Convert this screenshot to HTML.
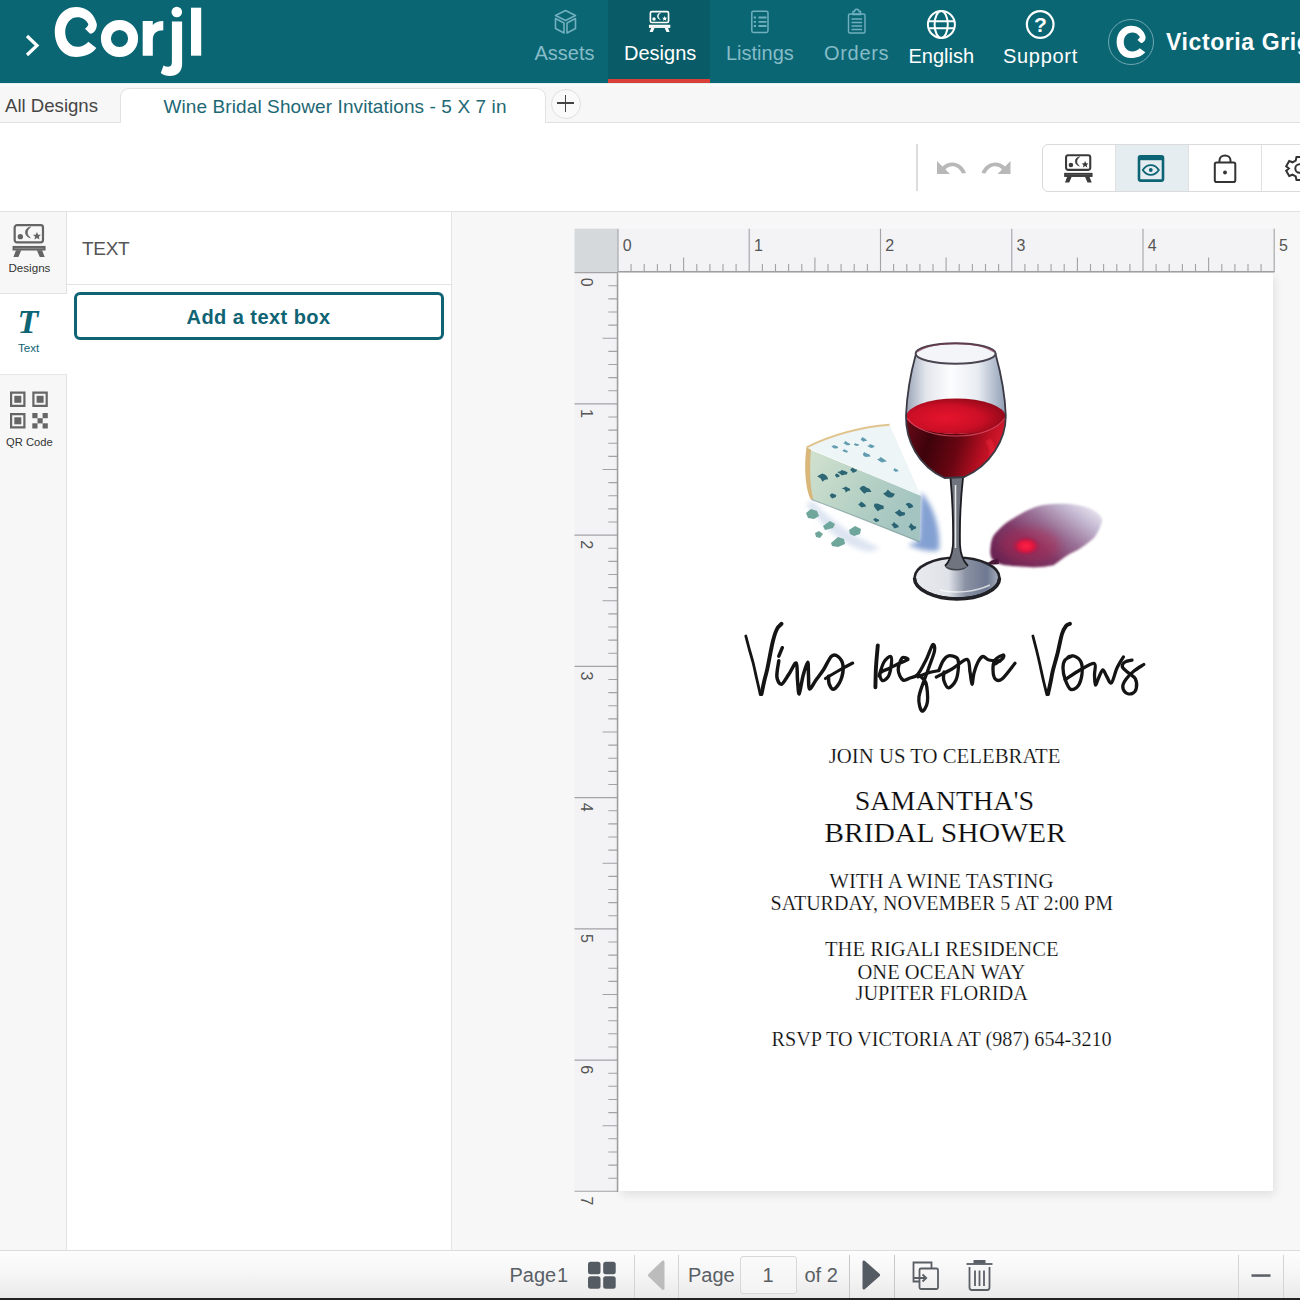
<!DOCTYPE html>
<html><head><meta charset="utf-8">
<style>
*{margin:0;padding:0;box-sizing:border-box}
html,body{width:1300px;height:1300px;overflow:hidden;background:#f5f5f5;font-family:"Liberation Sans",sans-serif}
.a{position:absolute}
.t{position:absolute;white-space:nowrap;line-height:1}
#hdr{left:0;top:0;width:1300px;height:83px;background:#0b6674}
.nav{color:#85bcc8;font-size:20px}
.navw{color:#fff;font-size:20px}
#tabs{left:0;top:83px;width:1300px;height:40px;background:linear-gradient(#fbfdfd,#f7f7f7 5px);border-bottom:1.5px solid #e0e0e0}
#toolbar{left:0;top:123px;width:1300px;height:89px;background:#fff;border-bottom:1px solid #e2e2e2}
#icons{left:0;top:212px;width:67px;height:1038px;background:#f7f7f7;border-right:1.5px solid #e2e2e2}
#panel{left:67px;top:212px;width:385px;height:1038px;background:#fff;border-right:1px solid #e4e4e4}
#canvas{left:452px;top:212px;width:848px;height:1038px;background:#f7f7f7}
#bottom{left:0;top:1250px;width:1300px;height:50px;background:linear-gradient(#fdfdfd,#f7f7f7 40%,#e9e9e9);border-top:1px solid #dcdcdc}
.sep{position:absolute;width:1px;background:#d4d4d4}
</style></head><body>

<!-- HEADER -->
<div id="hdr" class="a">
  <div class="a" style="left:608px;top:0;width:102px;height:83px;background:#095b67"></div>
  <div class="a" style="left:608px;top:79px;width:102px;height:4px;background:#da3f38"></div>
  <svg class="a" style="left:0;top:0" width="1300" height="83" viewBox="0 0 1300 83">
    <!-- chevron -->
    <polyline points="27,36 37,45.5 27,55" fill="none" stroke="#fff" stroke-width="3.2" stroke-linecap="butt"/>
    <!-- C -->
    <path fill="#fff" d="M75.8,7 C87,7 94.5,14 96.8,24 C97.2,29 94,33.6 90.1,33.8 L85,28.8 C87,27 88.3,25.5 88.3,24 C86,19.5 82,17.2 77.5,17.2 C70.5,17.2 65.2,23.5 65.2,32 C65.2,40.5 70.5,46.8 77.5,46.8 C82,46.8 86,44.5 88.3,41.7 L96.3,48.1 C92.5,53.5 85,57 75.8,57 C63.5,57 54.8,46 54.8,32 C54.8,18 63.5,7 75.8,7 Z"/>
    <!-- o -->
    <circle cx="119.5" cy="38.5" r="13.6" fill="none" stroke="#fff" stroke-width="10"/>
    <!-- r -->
    <path fill="#fff" d="M142.7,20.9 H152.8 V25 C155,22 158.5,20.9 163.3,20.9 V30.2 C157,30.2 152.8,33 152.8,40 V55.7 H142.7 Z"/>
    <!-- j -->
    <circle cx="176.8" cy="12" r="5.3" fill="#fff"/>
    <path fill="#fff" d="M171.9,21.5 H182.1 V64 C182.1,72 177,76 170,76 C166,76 163,75 160.8,73 L163.5,65.5 C165,66.3 166.5,66.8 168,66.8 C170.5,66.8 171.9,65.5 171.9,62 Z"/>
    <!-- l -->
    <rect x="191" y="7.7" width="10.2" height="48" fill="#fff"/>

    <!-- Assets cube -->
    <g fill="none" stroke="#70b0bf" stroke-width="1.6" stroke-linejoin="round">
      <path d="M565.5,10.5 L575.5,15.5 L565.5,20.5 L555.5,15.5 Z"/>
      <path d="M555.5,18.5 L564,23 L564,33 L555.5,28.5 Z"/>
      <path d="M575.5,18.5 L567,23 L567,33 L575.5,28.5 Z"/>
    </g>
    <!-- Designs easel icon (white) -->
    <g transform="translate(649,10.8) scale(0.75)" fill="none" stroke="#fff">
      <rect x="1.85" y="1.05" width="24.2" height="14.6" rx="2" stroke-width="2.2"/>
      <rect x="0.9" y="19.6" width="26.5" height="2.2" stroke-width="1.9800000000000002" fill="#fff" fill-opacity="0.55"/>
      <path d="M3,22.5 H7.5 L5,28.2 H0.8 Z M20.8,22.5 H25.3 L27.5,28.2 H23.3 Z" fill="#fff" stroke="none"/>
      <circle cx="6.7" cy="10.8" r="2.3" fill="#fff" stroke="none"/>
      <path d="M15.5,2.6 C9.8,3.2 9.6,10.6 15.2,11.8 C11.8,9.4 11.8,5.2 15.5,2.6 Z" fill="#fff" stroke="#fff" stroke-width="0.6"/>
      <path d="M20.9,6.8 L21.9,9.1 L24.3,9.2 L22.5,10.8 L23.1,13.2 L20.9,11.9 L18.7,13.2 L19.3,10.8 L17.5,9.2 L19.9,9.1 Z" fill="#fff" stroke="none"/>
    </g>
    <!-- Listings icon -->
    <g fill="none" stroke="#70b0bf" stroke-width="1.5">
      <rect x="751.8" y="11.2" width="16.2" height="21.2" rx="1.6"/>
      <path d="M758.5,17.5 H766.5 M758.5,21.8 H766.5 M758.5,26 H766.5" stroke-width="1.8"/>
      <path d="M753.8,17.5 H756 M753.8,21.8 H756 M753.8,26 H756" stroke-width="1.8"/>
    </g>
    <!-- Orders clipboard -->
    <g fill="none" stroke="#70b0bf" stroke-width="1.4">
      <rect x="848.5" y="14" width="16.5" height="19" rx="1.5"/>
      <path d="M853,14 V11.5 H854.5 A2.2,2.2 0 0 1 859,11.5 H860.5 V14.5 H853 Z"/>
      <path d="M851.5,19 H862 M851.5,22.5 H862 M851.5,26 H862 M851.5,29.5 H862"/>
    </g>
    <!-- Globe -->
    <g fill="none" stroke="#fff" stroke-width="2">
      <circle cx="941.4" cy="24.5" r="13.5"/>
      <ellipse cx="941.2" cy="24.5" rx="6.6" ry="13.5"/>
      <path d="M928.5,21.2 H954.3 M928.5,28.2 H954.3"/>
    </g>
    <!-- Support ? -->
    <circle cx="1040.2" cy="24.5" r="13.3" fill="none" stroke="#fff" stroke-width="2.2"/>
    <text x="1040.5" y="32.3" fill="#fff" font-family="Liberation Sans" font-weight="700" font-size="21" text-anchor="middle">?</text>
    <!-- avatar -->
    <circle cx="1131" cy="42" r="22.5" fill="none" stroke="#6fa6b1" stroke-width="1"/>
    <path fill="#fff" transform="translate(1078.8,21.3) scale(0.69,0.645)" d="M75.8,7 C87,7 94.5,14 96.8,24 C97.2,29 94,33.6 90.1,33.8 L85,28.8 C87,27 88.3,25.5 88.3,24 C86,19.5 82,17.2 77.5,17.2 C70.5,17.2 65.2,23.5 65.2,32 C65.2,40.5 70.5,46.8 77.5,46.8 C82,46.8 86,44.5 88.3,41.7 L96.3,48.1 C92.5,53.5 85,57 75.8,57 C63.5,57 54.8,46 54.8,32 C54.8,18 63.5,7 75.8,7 Z"/>
  </svg>
  <div class="t nav" style="left:534.5px;top:43px">Assets</div>
  <div class="t navw" style="left:624px;top:43px">Designs</div>
  <div class="t nav" style="left:726px;top:43px">Listings</div>
  <div class="t nav" style="left:824px;top:43px;letter-spacing:0.7px">Orders</div>
  <div class="t navw" style="left:908.5px;top:46px">English</div>
  <div class="t navw" style="left:1003px;top:46px;letter-spacing:0.7px">Support</div>
  <div class="t" style="left:1166px;top:31px;color:#fff;font-size:23px;font-weight:700;letter-spacing:0.6px">Victoria Grigsby</div>
</div>

<!-- TAB BAR -->
<div id="tabs" class="a">
  <div class="a" style="left:0;top:0;width:1300px;height:1px;background:#e3eef0"></div>
  <div class="t" style="left:5px;top:14px;font-size:18.6px;color:#454545">All Designs</div>
  <div class="a" style="left:119.5px;top:4.5px;width:426px;height:36px;background:#fff;border:1px solid #e2e2e2;border-bottom:none;border-radius:9px 9px 0 0"></div>
  <div class="t" style="left:163.5px;top:13.5px;font-size:19px;color:#1d6874;letter-spacing:0.1px">Wine Bridal Shower Invitations - 5 X 7 in</div>
  <div class="a" style="left:550.5px;top:5.5px;width:30px;height:30px;border-radius:50%;background:#fafafa;border:1px solid #e0e0e0"></div>
  <div class="a" style="left:557px;top:19.3px;width:17px;height:1.9px;background:#444"></div>
  <div class="a" style="left:564.6px;top:11.8px;width:1.9px;height:17px;background:#444"></div>
</div>

<!-- TOOLBAR -->
<div id="toolbar" class="a">
  <div class="a" style="left:916px;top:21px;width:2px;height:47px;background:#dcdcdc"></div>
  <div class="a" style="left:1041.5px;top:20.5px;width:270px;height:48px;border:1px solid #dadada;border-radius:6px;overflow:hidden;background:#fff">
    <div class="a" style="left:72.5px;top:0;width:74px;height:48px;background:#e6edf0;border-left:1px solid #e0e0e0;border-right:1px solid #e0e0e0"></div>
    <div class="a" style="left:218.5px;top:0;width:1px;height:48px;background:#e0e0e0"></div>
  </div>
  <svg class="a" style="left:0;top:0" width="1300" height="89" viewBox="0 123 1300 89">
    <g fill="#b8b8b8">
      <path d="M937,161 L937,174 L950,174 L945.5,169.5 C950,164.5 958,165 962,173.5 L966,173 C962,162 950,159.5 942.5,166.5 Z"/>
      <path d="M1010.5,161 L1010.5,174 L997.5,174 L1002,169.5 C997.5,164.5 989.5,165 985.5,173.5 L981.5,173 C985.5,162 997.5,159.5 1005,166.5 Z"/>
    </g>
    <!-- easel (dark) -->
    <g transform="translate(1064.2,154.2) scale(1.0)" fill="none" stroke="#3a3a3a">
      <rect x="1.85" y="1.05" width="24.2" height="14.6" rx="2" stroke-width="2.1"/>
      <rect x="0.9" y="19.6" width="26.5" height="2.2" stroke-width="1.8900000000000001" fill="#3a3a3a" fill-opacity="0.55"/>
      <path d="M3,22.5 H7.5 L5,28.2 H0.8 Z M20.8,22.5 H25.3 L27.5,28.2 H23.3 Z" fill="#3a3a3a" stroke="none"/>
      <circle cx="6.7" cy="10.8" r="2.3" fill="#3a3a3a" stroke="none"/>
      <path d="M15.5,2.6 C9.8,3.2 9.6,10.6 15.2,11.8 C11.8,9.4 11.8,5.2 15.5,2.6 Z" fill="#3a3a3a" stroke="#3a3a3a" stroke-width="0.6"/>
      <path d="M20.9,6.8 L21.9,9.1 L24.3,9.2 L22.5,10.8 L23.1,13.2 L20.9,11.9 L18.7,13.2 L19.3,10.8 L17.5,9.2 L19.9,9.1 Z" fill="#3a3a3a" stroke="none"/>
    </g>
  </svg>
  <svg class="a" style="left:1100px;top:0" width="200" height="89" viewBox="1100 123 200 89">
    <g fill="none" stroke="#0c6475" stroke-width="2.6">
      <rect x="1139" y="156.3" width="24" height="24.3" rx="1.5"/>
    </g>
    <rect x="1139" y="156" width="24" height="4.2" fill="#0c6475"/>
    <path d="M1142.8,170 C1147,163.5 1154.5,163.5 1158.8,170 C1154.5,176.5 1147,176.5 1142.8,170 Z" fill="none" stroke="#0c6475" stroke-width="1.8"/>
    <circle cx="1150.8" cy="170" r="1.9" fill="#0c6475"/>
    <g fill="none" stroke="#333" stroke-width="2">
      <rect x="1214.8" y="162.5" width="20.5" height="19.5" rx="1.8"/>
      <path d="M1219.5,162.5 V160.5 C1219.5,157.5 1222,155.5 1225,155.5 C1228,155.5 1230.5,157.5 1230.5,160.5 V162.5"/>
    </g>
    <circle cx="1225" cy="172.5" r="1.9" fill="#333"/>
    <g transform="translate(1299.5,168.5)" fill="none" stroke="#333" stroke-width="2">
      <path d="M-3,-11.5 H3 L3.8,-8 L7,-6.2 L10.3,-7.5 L13.3,-2.3 L10.6,0 L13.3,2.3 L10.3,7.5 L7,6.2 L3.8,8 L3,11.5 H-3 L-3.8,8 L-7,6.2 L-10.3,7.5 L-13.3,2.3 L-10.6,0 L-13.3,-2.3 L-10.3,-7.5 L-7,-6.2 L-3.8,-8 Z"/>
      <circle cx="0" cy="0" r="4.2"/>
    </g>
  </svg>
</div>

<!-- LEFT ICONS -->
<div id="icons" class="a">
  <div class="a" style="left:0;top:81px;width:67px;height:1px;background:#e3e3e3"></div>
  <div class="a" style="left:0;top:82px;width:68px;height:80px;background:#fff"></div>
  <div class="a" style="left:0;top:162px;width:67px;height:1px;background:#e6e6e6"></div>
  <svg class="a" style="left:0;top:0" width="67" height="260" viewBox="0 212 67 260">
    <g transform="translate(12.5,224) scale(1.17)" fill="none" stroke="#646464">
      <rect x="1.85" y="1.05" width="24.2" height="14.6" rx="2" stroke-width="1.9"/>
      <rect x="0.9" y="19.6" width="26.5" height="2.2" stroke-width="1.71" fill="#646464" fill-opacity="0.55"/>
      <path d="M3,22.5 H7.5 L5,28.2 H0.8 Z M20.8,22.5 H25.3 L27.5,28.2 H23.3 Z" fill="#646464" stroke="none"/>
      <circle cx="6.7" cy="10.8" r="2.3" fill="#646464" stroke="none"/>
      <path d="M15.5,2.6 C9.8,3.2 9.6,10.6 15.2,11.8 C11.8,9.4 11.8,5.2 15.5,2.6 Z" fill="#646464" stroke="#646464" stroke-width="0.6"/>
      <path d="M20.9,6.8 L21.9,9.1 L24.3,9.2 L22.5,10.8 L23.1,13.2 L20.9,11.9 L18.7,13.2 L19.3,10.8 L17.5,9.2 L19.9,9.1 Z" fill="#646464" stroke="none"/>
    </g>
    <text x="17.5" y="332.5" font-family="Liberation Serif" font-style="italic" font-weight="700" font-size="34" fill="#0e6473" text-anchor="start">T</text>
    <g fill="#666">
      <path fill-rule="evenodd" d="M10,391.5 H25.5 V407 H10 Z M12.2,393.7 V404.8 H23.3 V393.7 Z"/>
      <rect x="14.3" y="395.8" width="7" height="7"/>
      <path fill-rule="evenodd" d="M32.3,391.5 H47.8 V407 H32.3 Z M34.5,393.7 V404.8 H45.6 V393.7 Z"/>
      <rect x="36.6" y="395.8" width="7" height="7"/>
      <path fill-rule="evenodd" d="M10,413 H25.5 V428.5 H10 Z M12.2,415.2 V426.3 H23.3 V415.2 Z"/>
      <rect x="14.3" y="417.3" width="7" height="7"/>
      <rect x="32.3" y="413" width="5.2" height="5.2"/><rect x="42.6" y="413" width="5.2" height="5.2"/>
      <rect x="37.5" y="418.2" width="5.2" height="5.2"/>
      <rect x="32.3" y="423.3" width="5.2" height="5.2"/><rect x="42.6" y="423.3" width="5.2" height="5.2"/>
    </g>
  </svg>
  <div class="t" style="left:8.5px;top:49.5px;font-size:11.6px;color:#333">Designs</div>
  <div class="t" style="left:18px;top:129.5px;font-size:11.6px;color:#0e6473">Text</div>
  <div class="t" style="left:6px;top:224.5px;font-size:11.2px;color:#333">QR Code</div>
</div>
<div id="panel" class="a">
  <div class="t" style="left:15px;top:27px;font-size:19px;color:#555;letter-spacing:-0.3px">TEXT</div>
  <div class="a" style="left:0;top:72px;width:384px;height:1px;background:#e3e3e3"></div>
  <div class="a" style="left:7px;top:79.5px;width:370px;height:48.5px;border:3px solid #0f6373;border-radius:6px;background:#fff"></div>
  <div class="t" style="left:119.5px;top:94.5px;font-size:20px;font-weight:700;color:#0f6373;letter-spacing:0.45px">Add a text box</div>
</div>
<div id="canvas" class="a"></div>
<svg class="a" style="left:0;top:0" width="1300" height="1300" viewBox="0 0 1300 1300"><rect x="574.5" y="228.7" width="700.0" height="43.5" fill="#f3f3f5"/>
<rect x="574.5" y="228.7" width="43.5" height="43.5" fill="#d5d9db"/>
<rect x="574.5" y="272.2" width="43.5" height="919.7" fill="#f3f3f5"/>
<path d="M618.0,228.7 V272 M631.1,264 V272 M644.2,264 V272 M657.4,264 V272 M670.5,264 V272 M683.6,257.5 V272 M696.8,264 V272 M709.9,264 V272 M723.0,264 V272 M736.1,264 V272 M749.2,228.7 V272 M762.4,264 V272 M775.5,264 V272 M788.6,264 V272 M801.8,264 V272 M814.9,257.5 V272 M828.0,264 V272 M841.1,264 V272 M854.2,264 V272 M867.4,264 V272 M880.5,228.7 V272 M893.6,264 V272 M906.8,264 V272 M919.9,264 V272 M933.0,264 V272 M946.1,257.5 V272 M959.2,264 V272 M972.4,264 V272 M985.5,264 V272 M998.6,264 V272 M1011.8,228.7 V272 M1024.9,264 V272 M1038.0,264 V272 M1051.1,264 V272 M1064.2,264 V272 M1077.4,257.5 V272 M1090.5,264 V272 M1103.6,264 V272 M1116.8,264 V272 M1129.9,264 V272 M1143.0,228.7 V272 M1156.1,264 V272 M1169.2,264 V272 M1182.4,264 V272 M1195.5,264 V272 M1208.6,257.5 V272 M1221.8,264 V272 M1234.9,264 V272 M1248.0,264 V272 M1261.1,264 V272 M1274.2,228.7 V272 M574.5,272.6 H617 M608.3,285.7 H617 M608.3,298.9 H617 M608.3,312.0 H617 M608.3,325.1 H617 M602.5,338.2 H617 M608.3,351.4 H617 M608.3,364.5 H617 M608.3,377.6 H617 M608.3,390.7 H617 M574.5,403.9 H617 M608.3,417.0 H617 M608.3,430.1 H617 M608.3,443.2 H617 M608.3,456.4 H617 M602.5,469.5 H617 M608.3,482.6 H617 M608.3,495.7 H617 M608.3,508.9 H617 M608.3,522.0 H617 M574.5,535.1 H617 M608.3,548.2 H617 M608.3,561.4 H617 M608.3,574.5 H617 M608.3,587.6 H617 M602.5,600.7 H617 M608.3,613.9 H617 M608.3,627.0 H617 M608.3,640.1 H617 M608.3,653.2 H617 M574.5,666.4 H617 M608.3,679.5 H617 M608.3,692.6 H617 M608.3,705.7 H617 M608.3,718.9 H617 M602.5,732.0 H617 M608.3,745.1 H617 M608.3,758.2 H617 M608.3,771.4 H617 M608.3,784.5 H617 M574.5,797.6 H617 M608.3,810.7 H617 M608.3,823.9 H617 M608.3,837.0 H617 M608.3,850.1 H617 M602.5,863.2 H617 M608.3,876.4 H617 M608.3,889.5 H617 M608.3,902.6 H617 M608.3,915.7 H617 M574.5,928.9 H617 M608.3,942.0 H617 M608.3,955.1 H617 M608.3,968.2 H617 M608.3,981.4 H617 M602.5,994.5 H617 M608.3,1007.6 H617 M608.3,1020.7 H617 M608.3,1033.8 H617 M608.3,1047.0 H617 M574.5,1060.1 H617 M608.3,1073.2 H617 M608.3,1086.3 H617 M608.3,1099.5 H617 M608.3,1112.6 H617 M602.5,1125.7 H617 M608.3,1138.8 H617 M608.3,1152.0 H617 M608.3,1165.1 H617 M608.3,1178.2 H617 M574.5,1191.3 H617" stroke="#a3a3a6" stroke-width="1.1" fill="none"/>
<path d="M618,271.8 H1274.5 M617.5,272 V1191.9" stroke="#a0a0a3" stroke-width="1.4" fill="none"/>
<g font-family="Liberation Sans" font-size="16" fill="#555"><text x="622.8" y="250.5">0</text><text x="754.0" y="250.5">1</text><text x="885.3" y="250.5">2</text><text x="1016.5" y="250.5">3</text><text x="1147.8" y="250.5">4</text><text x="1279.0" y="250.5">5</text><text transform="translate(580.5,277.8) rotate(90)" x="0" y="0">0</text><text transform="translate(580.5,409.1) rotate(90)" x="0" y="0">1</text><text transform="translate(580.5,540.3) rotate(90)" x="0" y="0">2</text><text transform="translate(580.5,671.6) rotate(90)" x="0" y="0">3</text><text transform="translate(580.5,802.8) rotate(90)" x="0" y="0">4</text><text transform="translate(580.5,934.1) rotate(90)" x="0" y="0">5</text><text transform="translate(580.5,1065.3) rotate(90)" x="0" y="0">6</text><text transform="translate(580.5,1196.5) rotate(90)" x="0" y="0">7</text></g></svg>
<div id="paper" class="a" style="left:618.5px;top:272.5px;width:654.5px;height:918.5px;background:#fff;box-shadow:2px 4px 9px rgba(0,0,0,0.09)"></div>
<svg id="inv" class="a" style="left:0;top:0" width="1300" height="1300" viewBox="0 0 1300 1300">
<defs>
  <clipPath id="bowlClip"><path d="M915.8,354.6 C911,372 907,392 906,415.8 C905.5,440 918,466 944.6,478 L964.2,477 C990,466 1006,440 1005.8,415.8 C1005,392 1000,370 995.4,353.5 Z"/></clipPath>
  <filter id="bl1" x="-20%" y="-20%" width="140%" height="140%"><feGaussianBlur stdDeviation="1"/></filter>
  <filter id="bl2" x="-30%" y="-30%" width="160%" height="160%"><feGaussianBlur stdDeviation="2.5"/></filter>
  <filter id="bl4" x="-40%" y="-40%" width="180%" height="180%"><feGaussianBlur stdDeviation="4"/></filter>
  <linearGradient id="glassG" x1="0" y1="0" x2="1" y2="0">
    <stop offset="0" stop-color="#9aa3b6"/><stop offset="0.2" stop-color="#e2e6ec"/>
    <stop offset="0.45" stop-color="#fdfdfe"/><stop offset="0.72" stop-color="#e8ecf2"/><stop offset="1" stop-color="#8f9db4"/>
  </linearGradient>
  <linearGradient id="wineBody" x1="0" y1="0" x2="1" y2="0.2">
    <stop offset="0" stop-color="#6a0a18"/><stop offset="0.3" stop-color="#3e030b"/>
    <stop offset="0.6" stop-color="#6a0612"/><stop offset="0.85" stop-color="#b80f22"/><stop offset="1" stop-color="#d4182c"/>
  </linearGradient>
  <radialGradient id="wineTop" cx="0.4" cy="0.55" r="0.65">
    <stop offset="0" stop-color="#e5142c"/><stop offset="0.55" stop-color="#cc0f26"/><stop offset="1" stop-color="#8a0818"/>
  </radialGradient>
  <linearGradient id="baseG" x1="0" y1="0" x2="1" y2="0">
    <stop offset="0" stop-color="#e8eaee"/><stop offset="0.4" stop-color="#dfe2e8"/><stop offset="0.6" stop-color="#8a92a4"/><stop offset="0.85" stop-color="#6e7890"/><stop offset="1" stop-color="#a8b0c0"/>
  </linearGradient>
  <linearGradient id="frontG" x1="0" y1="0" x2="1" y2="0.5">
    <stop offset="0" stop-color="#d3e2cf"/><stop offset="0.5" stop-color="#b9d3c6"/><stop offset="1" stop-color="#a3c4c0"/>
  </linearGradient>
  <linearGradient id="stainG" x1="0.05" y1="0.85" x2="0.95" y2="0.15">
    <stop offset="0" stop-color="#6a2452"/><stop offset="0.35" stop-color="#7e3a68"/><stop offset="0.6" stop-color="#9a7096"/><stop offset="0.85" stop-color="#c2b6d0"/><stop offset="1" stop-color="#e2dcea"/>
  </linearGradient>
  <radialGradient id="redSpot" cx="0.5" cy="0.5" r="0.5">
    <stop offset="0" stop-color="#ff1f45"/><stop offset="0.5" stop-color="#e0173f"/><stop offset="1" stop-color="#a3154a" stop-opacity="0"/>
  </radialGradient>
</defs>
<g id="art">
  <!-- cheese shadow -->
  <path d="M921,492 C933,505 941,528 939,550 C928,553 916,548 908,545 L919,541 Z" fill="#4f78c0" opacity="0.7" filter="url(#bl2)"/>
  <path d="M806,505 C820,520 835,545 870,552 L880,548 C850,535 825,515 812,500 Z" fill="#9db4d8" opacity="0.35" filter="url(#bl2)"/>
  <!-- cheese front face -->
  <path d="M808.5,449 L920.8,495.8 L919.6,541.9 C890,530 840,510 811.5,499.5 C808,490 806.5,470 808.5,449 Z" fill="url(#frontG)"/>
  <!-- rind left -->
  <path d="M806.5,447.3 L811,449.5 C809.5,468 810,488 813.5,499.8 L810.5,499 C806,490 803.5,468 806.5,447.3 Z" fill="#d9b77a"/>
  <!-- top face -->
  <path d="M806.5,447.3 C830,436 860,427 889.6,424.8 L920.8,495.8 Z" fill="#eef5f6"/>
  <path d="M806.5,447.3 C830,436 860,427 889.6,424.8" fill="none" stroke="#e0c48e" stroke-width="2"/>
  <!-- top face spots -->
  <g fill="#3f86a0" opacity="0.8"><path d="M838.1,448.1 L835.9,448.4 L834.3,448.5 L832.9,447.6 L831.3,446.6 L832.3,445.9 L833.3,445.3 L835.2,445.6 L837.8,446.5 Z"/><path d="M850.5,444.7 L848.6,445.2 L846.7,445.3 L845.3,444.3 L843.2,443.2 L844.5,442.4 L845.1,440.7 L847.5,442.4 L849.2,443.2 Z"/><path d="M870.5,456.6 L867.6,456.8 L865.7,457.0 L863.8,456.0 L862.9,454.8 L863.2,453.7 L864.0,452.0 L866.9,453.4 L869.5,454.6 Z"/><path d="M858.7,445.4 L857.7,445.7 L856.5,445.9 L855.1,445.4 L853.9,444.4 L854.6,443.6 L855.7,443.2 L857.0,443.9 L859.1,444.3 Z"/><path d="M886.9,461.3 L884.1,461.9 L881.7,462.6 L879.4,460.9 L877.0,459.2 L879.4,458.5 L880.2,457.1 L882.7,458.3 L884.4,459.4 Z"/><path d="M873.6,447.2 L872.6,447.7 L871.2,448.1 L869.5,447.3 L867.2,446.0 L869.2,445.3 L869.8,443.9 L872.3,445.0 L874.8,446.0 Z"/><path d="M898.3,471.2 L896.9,471.5 L895.7,471.9 L894.6,471.0 L893.3,470.2 L893.7,469.3 L894.5,468.2 L896.6,469.2 L898.2,470.1 Z"/><path d="M848.2,451.9 L846.8,452.4 L845.4,452.3 L844.0,451.7 L842.2,450.8 L843.4,450.0 L844.3,449.2 L846.0,450.2 L847.2,450.8 Z"/><path d="M867.3,440.8 L865.0,440.9 L863.6,441.8 L861.6,440.6 L860.5,439.3 L861.6,438.5 L862.1,437.1 L864.5,438.3 L865.9,439.3 Z"/></g>
  <!-- front face spots -->
  <g fill="#1d5a6c" opacity="0.9"><path d="M828.2,479.2 L825.0,479.7 L822.4,481.7 L820.7,478.4 L817.2,476.2 L819.9,474.7 L822.1,473.6 L825.0,474.5 L827.1,476.6 Z"/><path d="M846.7,474.6 L844.0,474.8 L842.1,475.4 L840.2,474.1 L837.2,472.1 L840.4,471.2 L841.6,469.9 L844.1,470.8 L847.7,472.2 Z"/><path d="M850.3,490.6 L847.9,491.0 L845.8,492.6 L844.8,489.8 L841.7,488.3 L844.3,487.4 L845.6,486.5 L847.4,487.6 L849.6,488.5 Z"/><path d="M871.5,492.1 L866.9,491.9 L864.3,493.8 L861.6,491.1 L859.5,488.5 L861.4,486.6 L863.9,485.8 L866.4,487.4 L869.5,488.7 Z"/><path d="M866.1,506.6 L863.5,507.0 L861.6,507.5 L859.8,506.0 L858.2,504.3 L859.9,503.3 L860.9,501.4 L863.4,503.0 L865.1,504.5 Z"/><path d="M883.5,508.9 L880.5,509.6 L877.7,511.3 L875.2,508.3 L873.8,506.0 L874.5,503.7 L877.4,503.5 L880.0,504.5 L883.8,506.0 Z"/><path d="M893.6,496.3 L891.6,497.5 L888.9,497.5 L886.2,496.2 L883.1,493.6 L886.0,492.0 L887.8,489.4 L891.0,492.4 L894.9,493.8 Z"/><path d="M904.9,515.1 L902.3,515.8 L899.8,516.4 L897.4,514.7 L894.7,512.3 L897.7,511.1 L899.2,509.3 L901.5,511.7 L905.0,512.6 Z"/><path d="M913.4,506.8 L911.4,507.8 L908.8,508.4 L907.5,506.0 L905.7,504.5 L906.8,503.2 L908.7,502.8 L910.6,503.4 L912.3,504.7 Z"/><path d="M915.7,528.8 L913.7,529.2 L911.7,531.1 L910.3,528.3 L908.4,526.7 L909.7,525.4 L911.0,523.0 L913.4,525.8 L916.3,526.8 Z"/><path d="M835.8,496.9 L834.2,497.7 L832.1,498.4 L830.5,496.7 L829.7,495.1 L830.7,494.2 L831.9,493.2 L833.9,493.9 L836.3,495.1 Z"/><path d="M878.8,521.2 L877.4,521.6 L876.0,522.2 L874.8,520.9 L873.1,519.7 L874.3,518.6 L875.7,517.9 L877.1,519.1 L879.2,519.8 Z"/><path d="M856.4,471.4 L854.9,472.0 L853.0,473.1 L851.6,471.2 L850.2,469.7 L851.4,468.6 L852.7,467.4 L854.3,469.1 L857.1,469.7 Z"/><path d="M899.1,526.9 L896.7,527.7 L894.3,528.4 L892.8,526.1 L891.1,524.5 L893.0,523.7 L893.8,521.8 L895.7,523.8 L897.5,524.7 Z"/><path d="M839.8,476.6 L838.2,477.0 L836.8,477.7 L835.8,476.2 L834.8,475.2 L835.6,474.3 L836.6,473.5 L838.2,474.2 L839.4,475.2 Z"/></g>
  <path d="M811.5,499.5 C840,510 890,530 919.6,541.9" fill="none" stroke="#6a8c90" stroke-width="1.2" opacity="0.6"/>
  <!-- crumbs -->
  <g fill="#6fa69b">
    <path d="M806,513 l5,-4 l6,2 l2,5 l-5,3 l-6,-1 z"/>
    <path d="M823,526 l7,-5 l5,3 l-2,4 l-8,2 z"/>
    <path d="M815,533 l4,-2 l4,3 l-3,4 l-4,-1 z"/>
    <path d="M831,543 l7,-6 l6,2 l1,5 l-7,3 l-6,-1 z"/>
    <path d="M849,530 l6,-4 l6,3 l-1,5 l-6,2 l-4,-2 z"/>
  </g>
  <!-- stain -->
  <path d="M990.5,547.5 C991,540 993,535 997,531.4 C1003,525 1008,521 1013,518.5 C1025,511 1035,506 1045.4,504.7 C1055,503.5 1062,503.5 1069.6,504 C1080,505 1088,507 1093.9,510.4 C1100,514 1103,518 1102,521.7 C1100,528 1098,533 1093.9,537.9 C1085,546 1078,550 1069.6,554 C1063,558 1058,562 1053.5,565.3 C1045,567 1037,567.5 1029.2,567 C1020,566.5 1012,566 1005,565.3 C999,564 995,562 992,558.9 C990,555 990,551 990.5,547.5 Z" fill="url(#stainG)" filter="url(#bl1)"/>
  <ellipse cx="1030" cy="545" rx="30" ry="17" fill="#c0204a" opacity="0.35" filter="url(#bl4)"/>
  <ellipse cx="1026" cy="546" rx="15" ry="10" fill="url(#redSpot)"/>
  <path d="M986,564 C990,561 995,559 998,558.5 L999,564 C995,564.5 990,565 986,564 Z" fill="#4a1838"/>
  <!-- glass base -->
  <ellipse cx="957" cy="578" rx="42.5" ry="20.5" fill="url(#baseG)"/>
  <path d="M914.5,578 C914.5,590 935,599 957,599 C980,599 999.5,590 999.5,578" fill="none" stroke="#1e1e22" stroke-width="3.5"/>
  <ellipse cx="957" cy="578" rx="42.5" ry="20.5" fill="none" stroke="#222228" stroke-width="2.6"/>
  <ellipse cx="956" cy="566" rx="11" ry="4.5" fill="#2a2c34" opacity="0.85"/>
  <path d="M940,590 C955,594 975,592 990,585" fill="none" stroke="#fff" stroke-width="1.5" opacity="0.7"/>
  <!-- stem -->
  <path d="M950.5,478 C952.5,500 953.5,520 953,545 C952,556 948,563 945,566 C952,570 962,570 968,566 C964,562 960.5,555 960,545 C959.5,520 960.5,500 963,478 Z" fill="#6f747e"/>
  <path d="M950.5,478 C952.5,500 953.5,520 953,545 C952,556 948,563 945,566 M963,478 C960.5,500 959.5,520 960,545 C960.5,555 964,562 968,566" fill="none" stroke="#1c1c22" stroke-width="1.8"/>
  <path d="M955.5,485 V548" stroke="#f4f4f6" stroke-width="1.6" opacity="0.9"/>
  <!-- glass bowl -->
  <path d="M915.8,354.6 C911,372 907,392 906,415.8 C905.5,440 918,466 944.6,478 L964.2,477 C990,466 1006,440 1005.8,415.8 C1005,392 1000,370 995.4,353.5 Z" fill="url(#glassG)"/>
  <!-- wine body -->
  <path d="M906.3,414 C905.5,440 918,466 944.6,478 L964.2,477 C990,466 1006,440 1005.6,414 C1000,425 980,434 956,434 C932,434 912,425 906.3,414 Z" fill="url(#wineBody)"/>
  <ellipse cx="956" cy="416.3" rx="49.5" ry="17.8" fill="url(#wineTop)"/>
  <path d="M907,418 C915,430 935,436 956,436 C978,436 997,430 1005,418" fill="none" stroke="#e0526a" stroke-width="1.2" opacity="0.8"/>
  <g clip-path="url(#bowlClip)"><path d="M988,440 C995,450 994,462 984,472" fill="none" stroke="#e8283a" stroke-width="6" opacity="0.6" filter="url(#bl1)"/></g>
  <!-- bowl outline -->
  <path d="M915.8,354.6 C911,372 907,392 906,415.8 C905.5,440 918,466 944.6,478 L964.2,477 C990,466 1006,440 1005.8,415.8 C1005,392 1000,370 995.4,353.5" fill="none" stroke="#3b3a44" stroke-width="1.8"/>
  <!-- rim -->
  <ellipse cx="955.6" cy="353.5" rx="40" ry="10.3" fill="#f4f5f8" stroke="#4a4550" stroke-width="2"/>
  <path d="M917,352 C925,346 940,343.5 955,343.5 C972,343.5 986,346 994,352" fill="none" stroke="#7a3048" stroke-width="1.5" opacity="0.6"/>
</g>
<g id="script" fill="none" stroke="#141414" stroke-linecap="round" stroke-linejoin="round">
<path d="M745.8,636.0 C746.4,638.3 748.2,645.4 749.5,650.0 C750.8,654.6 752.0,658.5 753.3,663.5 C754.5,668.5 755.8,674.8 757.0,680.0 C758.2,685.2 759.8,692.2 760.3,694.7" stroke-width="2.8"/>
<path d="M761.5,694.0 C762.0,691.7 763.5,684.2 764.5,680.0 C765.5,675.8 765.9,675.1 767.3,668.8 C768.7,662.5 771.1,648.6 772.7,642.0 C774.3,635.4 775.5,632.0 777.0,629.0 C778.5,626.0 780.8,624.7 781.5,623.8" stroke-width="3.9"/>
<path d="M782.3,647.7 C781.7,649.1 779.4,654.8 778.8,656.2" stroke-width="3.5"/>
<path d="M778.8,660.8 C778.5,663.5 776.4,673.1 776.9,677.0 C777.4,680.9 779.5,684.7 781.5,684.2 C783.5,683.7 786.5,677.5 789.0,674.0 C791.5,670.5 794.8,662.0 796.2,663.0 C797.6,664.0 797.0,674.9 797.5,680.0 C798.0,685.1 798.3,694.5 799.2,693.8 C800.1,693.1 801.6,681.2 803.0,676.0 C804.4,670.8 806.8,662.3 807.7,662.3 C808.6,662.3 808.2,671.5 808.5,676.0 C808.8,680.5 808.2,688.3 809.5,689.0 C810.8,689.7 813.6,683.3 816.0,680.0 C818.4,676.7 821.2,673.2 823.8,669.2 C826.4,665.2 829.1,658.3 831.5,656.2 C833.9,654.1 836.1,655.0 838.0,656.5 C839.9,658.0 842.5,661.5 843.0,665.4 C843.5,669.3 842.3,676.0 840.8,680.0 C839.3,684.0 835.7,688.5 833.8,689.2 C831.9,689.9 830.1,686.2 829.2,684.0 C828.3,681.8 828.6,677.5 828.5,676.2" stroke-width="3.5"/>
<path d="M825.4,678.5 C827.5,677.2 833.5,673.6 838.0,671.0 C842.5,668.4 850.2,664.3 852.7,663.0" stroke-width="3.1"/>
<path d="M877.8,645.4 C877.5,649.0 876.4,660.0 876.0,667.0 C875.6,674.0 875.5,683.8 875.4,687.2" stroke-width="3.9"/>
<path d="M879.0,676.0 C879.8,673.7 882.0,665.2 884.0,662.0 C886.0,658.8 889.6,655.7 890.8,656.5 C892.0,657.3 891.5,663.6 891.0,667.0 C890.5,670.4 889.5,674.8 888.0,677.0 C886.5,679.2 883.5,681.2 882.2,680.5 C880.9,679.8 879.0,675.1 880.3,673.0 C881.6,670.9 886.7,669.7 890.0,668.0 C893.3,666.3 897.0,664.4 900.0,663.0 C903.0,661.6 907.7,660.3 908.0,659.5 C908.3,658.7 903.6,656.2 902.0,658.0 C900.4,659.8 898.0,666.3 898.2,670.0 C898.4,673.7 901.0,678.7 903.0,680.0 C905.0,681.3 907.5,679.0 910.0,678.0 C912.5,677.0 915.1,677.3 917.8,674.3 C920.5,671.3 923.5,664.9 926.0,660.0 C928.5,655.1 931.2,646.3 932.6,644.8 C934.0,643.3 935.3,646.8 934.5,651.0 C933.7,655.2 930.6,662.4 928.0,670.0 C925.4,677.6 920.0,689.7 919.0,696.5 C918.0,703.3 920.6,710.1 922.0,711.0 C923.4,711.9 926.7,706.7 927.4,702.0 C928.1,697.3 927.2,687.3 926.0,683.0 C924.8,678.7 921.0,677.2 920.0,676.0" stroke-width="3.3"/>
<path d="M917.8,677.0 C919.5,676.3 924.5,674.1 928.0,673.0 C931.5,671.9 937.0,671.0 938.8,670.6" stroke-width="3.1"/>
<path d="M938.8,670.6 C939.5,669.0 941.4,663.5 943.0,661.0 C944.6,658.5 946.3,656.3 948.6,655.8 C950.9,655.3 955.4,656.3 957.0,658.0 C958.6,659.7 958.7,662.3 958.5,666.0 C958.3,669.7 957.6,676.4 956.0,680.0 C954.4,683.6 950.6,687.8 948.6,687.8 C946.6,687.8 944.5,682.6 943.7,680.0 C942.9,677.4 944.0,673.3 944.0,672.0" stroke-width="3.3"/>
<path d="M936.3,677.0 C938.9,675.7 946.9,671.9 952.0,669.0 C957.1,666.1 964.0,659.0 967.0,659.5 C970.0,660.0 969.2,667.9 970.0,672.0 C970.8,676.1 971.3,684.0 972.0,684.2 C972.7,684.4 973.0,676.7 974.0,673.0 C975.0,669.3 976.5,664.8 978.0,662.0 C979.5,659.2 981.2,656.8 983.0,656.5 C984.8,656.2 986.2,659.2 989.0,660.0 C991.8,660.8 998.2,660.8 1000.0,661.0" stroke-width="3.3"/>
<path d="M995.0,664.0 C996.3,663.0 1001.5,659.8 1002.8,658.3 C1004.1,656.8 1004.3,654.7 1003.0,655.0 C1001.7,655.3 996.7,657.5 995.0,660.0 C993.3,662.5 992.9,666.8 993.0,670.0 C993.1,673.2 993.9,677.7 995.4,679.2 C996.9,680.7 998.7,681.7 1002.0,679.0 C1005.3,676.3 1012.8,665.8 1015.0,663.2" stroke-width="3.3"/>
<path d="M1032.9,636.0 C1033.5,638.3 1035.3,645.2 1036.5,650.0 C1037.7,654.8 1038.8,659.5 1040.0,665.0 C1041.2,670.5 1042.8,678.0 1044.0,683.0 C1045.2,688.0 1046.4,692.8 1046.9,694.7" stroke-width="2.8"/>
<path d="M1048.0,694.0 C1048.5,691.7 1050.2,684.0 1051.0,680.0 C1051.8,676.0 1051.9,674.5 1053.0,670.0 C1054.1,665.5 1056.2,658.7 1057.7,652.7 C1059.2,646.7 1060.6,638.5 1062.0,634.0 C1063.4,629.5 1064.7,627.7 1066.0,626.0 C1067.3,624.3 1069.3,624.2 1070.0,623.8" stroke-width="3.9"/>
<path d="M1072.0,656.0 C1070.8,656.7 1066.5,658.0 1065.0,660.0 C1063.5,662.0 1063.0,664.7 1063.0,668.0 C1063.0,671.3 1063.9,676.1 1065.2,679.6 C1066.5,683.1 1068.5,688.2 1070.6,689.3 C1072.7,690.4 1076.1,688.5 1078.0,686.0 C1079.9,683.5 1081.5,678.0 1082.0,674.0 C1082.5,670.0 1082.3,665.0 1081.0,662.0 C1079.7,659.0 1076.2,656.8 1074.0,656.0 C1071.8,655.2 1069.0,656.8 1068.0,657.0" stroke-width="3.3"/>
<path d="M1065.2,679.6 C1067.7,678.0 1075.2,672.7 1080.0,670.0 C1084.8,667.3 1091.9,662.7 1094.3,663.5 C1096.7,664.3 1094.3,671.4 1094.5,675.0 C1094.7,678.6 1094.7,684.7 1095.4,685.0 C1096.2,685.3 1097.8,679.5 1099.0,677.0 C1100.2,674.5 1101.6,670.0 1102.9,670.0 C1104.2,670.0 1105.6,674.9 1107.0,677.0 C1108.4,679.1 1109.8,684.3 1111.5,682.8 C1113.2,681.3 1115.0,672.3 1117.0,668.0 C1119.0,663.7 1122.3,658.8 1123.4,657.0" stroke-width="3.3"/>
<path d="M1132.0,660.2 C1130.8,660.5 1126.6,660.9 1125.0,662.0 C1123.4,663.1 1121.8,665.0 1122.3,666.7 C1122.8,668.5 1125.8,670.5 1128.0,672.5 C1130.2,674.5 1133.8,675.9 1135.2,678.5 C1136.6,681.1 1136.8,685.7 1136.3,688.2 C1135.8,690.7 1133.8,692.9 1132.0,693.6 C1130.2,694.3 1127.0,693.8 1125.5,692.5 C1124.0,691.2 1122.6,688.3 1122.8,686.0 C1123.0,683.7 1124.7,681.0 1126.6,678.5 C1128.5,676.0 1131.1,673.3 1134.0,671.0 C1136.9,668.7 1142.2,665.6 1143.8,664.5" stroke-width="3.3"/>
</g>
<g font-family="Liberation Serif" fill="#0a0a0a" stroke="#fff" stroke-width="0.2"><text x="828.7" y="762.7" font-size="20.5" textLength="231.8" lengthAdjust="spacingAndGlyphs">JOIN US TO CELEBRATE</text>
<text x="854.7" y="809.8" font-size="28" textLength="179.5" lengthAdjust="spacingAndGlyphs">SAMANTHA&#39;S</text>
<text x="824.2" y="842" font-size="28" textLength="241.8" lengthAdjust="spacingAndGlyphs">BRIDAL SHOWER</text>
<text x="829.2" y="887.7" font-size="20.5" textLength="224.3" lengthAdjust="spacingAndGlyphs">WITH A WINE TASTING</text>
<text x="770.5" y="910.4" font-size="20.5" textLength="342.5" lengthAdjust="spacingAndGlyphs">SATURDAY, NOVEMBER 5 AT 2:00 PM</text>
<text x="825" y="955.5" font-size="20.5" textLength="233.5" lengthAdjust="spacingAndGlyphs">THE RIGALI RESIDENCE</text>
<text x="857.5" y="978.5" font-size="20.5" textLength="167.8" lengthAdjust="spacingAndGlyphs">ONE OCEAN WAY</text>
<text x="855.5" y="999.8" font-size="20.5" textLength="172.5" lengthAdjust="spacingAndGlyphs">JUPITER FLORIDA</text>
<text x="771.6" y="1045.5" font-size="20.5" textLength="340.1" lengthAdjust="spacingAndGlyphs">RSVP TO VICTORIA AT (987) 654-3210</text></g>
</svg>

<!-- BOTTOM BAR -->
<div id="bottom" class="a">
  <div class="t" style="left:509.5px;top:14px;font-size:20px;color:#5a5f66">Page</div>
  <div class="t" style="left:557px;top:14px;font-size:20px;color:#5a5f66">1</div>
  <svg class="a" style="left:0;top:-1250px" width="1300" height="1300" viewBox="0 0 1300 1300">
    <g fill="#555b62">
      <rect x="588" y="1260.7" width="12.5" height="12.5" rx="2.5"/>
      <rect x="603.2" y="1260.7" width="12.5" height="12.5" rx="2.5"/>
      <rect x="588" y="1275.2" width="12.5" height="12.5" rx="2.5"/>
      <rect x="603.2" y="1275.2" width="12.5" height="12.5" rx="2.5"/>
    </g>
    <path d="M664.5,1261 V1287.5 C664.5,1289 663,1289.5 662,1288.5 L648.5,1275.5 C647.8,1274.8 647.8,1273.8 648.5,1273 L662,1260 C663,1259 664.5,1259.5 664.5,1261 Z" fill="#bcbcbc"/>
    <path d="M862.5,1261 V1287 C862.5,1288.5 864,1289 865,1288 L879.5,1275.2 C880.3,1274.5 880.3,1273.5 879.5,1272.8 L865,1260 C864,1259 862.5,1259.5 862.5,1261 Z" fill="#555b62"/>
    <g fill="none" stroke="#5a5f66" stroke-width="1.8">
      <path d="M919,1280.5 H913.5 V1261.5 H931.5 V1267"/>
      <rect x="919.5" y="1267.5" width="18.5" height="20.5" rx="1.5"/>
      <path d="M913.5,1277 H926 M922.5,1273.5 L926.2,1277 L922.5,1280.5"/>
    </g>
    <g fill="none" stroke="#5a5f66" stroke-width="1.8">
      <path d="M966.5,1263 H992.5"/>
      <path d="M969.5,1266 V1286.5 C969.5,1288 970.5,1289 972,1289 H987 C988.5,1289 989.5,1288 989.5,1286.5 V1266"/>
      <path d="M975,1269.5 V1285 M979.5,1269.5 V1285 M984,1269.5 V1285"/>
    </g>
    <rect x="973.5" y="1259" width="12" height="3.5" fill="#5a5f66"/>
    <rect x="1251.5" y="1273.3" width="19" height="2.5" fill="#5a5f66"/>
  </svg>
  <div class="sep" style="left:633.5px;top:4px;height:44px"></div>
  <div class="sep" style="left:678px;top:4px;height:44px"></div>
  <div class="t" style="left:688px;top:14px;font-size:20px;color:#5a5f66">Page</div>
  <div class="a" style="left:740px;top:5px;width:57px;height:38px;border:1px solid #d8d8d8;border-radius:3px;background:linear-gradient(#fafafa,#f3f3f3)"></div>
  <div class="t" style="left:762.5px;top:14px;font-size:20px;color:#5a5f66">1</div>
  <div class="t" style="left:804.5px;top:14px;font-size:20px;color:#5a5f66">of 2</div>
  <div class="sep" style="left:848.5px;top:4px;height:44px;background:#c8c8c8"></div>
  <div class="sep" style="left:893.5px;top:4px;height:44px;background:#c8c8c8"></div>
  <div class="sep" style="left:1238px;top:4px;height:44px"></div>
  <div class="sep" style="left:1282.5px;top:4px;height:44px"></div>
</div>
<div class="a" style="left:0;top:1298px;width:1300px;height:2px;background:#222"></div>

</body></html>
